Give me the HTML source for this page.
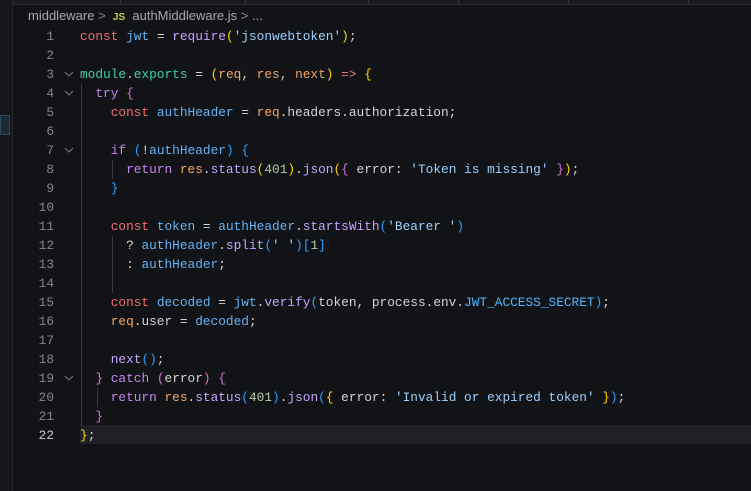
<!DOCTYPE html>
<html><head><meta charset="utf-8"><style>
html,body{margin:0;padding:0;width:751px;height:491px;overflow:hidden;background:#121316;}
body{position:relative;font-family:"Liberation Mono",monospace;}
.top{position:absolute;left:0;top:0;width:751px;height:4px;background:#1a1b1e;border-bottom:1px solid #2a2b2e;}
.sep{position:absolute;top:0;width:1px;height:4px;background:#333;}
.lb{position:absolute;left:0;top:0;width:12px;height:491px;background:#16171a;border-right:1px solid #26272a;}
.mark{position:absolute;left:0;top:115px;width:10px;height:20px;background:#1c2a33;border:1px solid #2c4a5a;box-sizing:border-box;}
.bc{position:absolute;left:28px;top:8px;font:13px "Liberation Sans",sans-serif;color:#a9a9a9;white-space:pre;}
.bc .js{color:#cbcb41;font-weight:bold;font-size:10px;}
.hl{position:absolute;left:80px;top:425px;width:671px;height:19px;background:#202124;}
.ln{position:absolute;left:20px;top:27px;width:34px;text-align:right;font-size:12.8px;line-height:19px;color:#858585;white-space:pre;}
.code{position:absolute;left:80px;top:27px;font-size:12.8px;line-height:19px;color:#d4d4d4;white-space:pre;}
.fold{position:absolute;left:64px;width:10px;height:6px;}
.guide{position:absolute;width:1px;background:#3a3b3e;}
.k{color:#f26d78}.c{color:#c586f0}.v{color:#64b4f6}.f{color:#c6a4ff}.o{color:#f2a765}.s{color:#9cd1ff}.n{color:#b5cea8}.t{color:#3fcfa8}.C{color:#4fb8ff}
.y{color:#ffd700}.p{color:#da70d6}.b{color:#2a9fff}
</style></head><body>
<div class="top"></div>
<div class="sep" style="left:12px"></div><div class="sep" style="left:120px"></div><div class="sep" style="left:245px"></div><div class="sep" style="left:368px"></div><div class="sep" style="left:458px"></div><div class="sep" style="left:568px"></div><div class="sep" style="left:688px"></div>
<div class="lb"></div><div class="mark"></div>
<div class="bc">middleware <span style="color:#888">&gt;</span>  <span class="js">JS</span>  authMiddleware.js <span style="color:#888">&gt;</span> ...</div>
<div class="hl"></div>
<div class="guide" style="left:81px;top:84px;height:342px"></div>
<div class="guide" style="left:112px;top:160px;height:19px"></div>
<div class="guide" style="left:112px;top:236px;height:57px"></div>
<div class="guide" style="left:97px;top:388px;height:19px"></div>
<svg class="fold" style="top:71px" viewBox="0 0 10 6"><path d="M1 1 L5 5 L9 1" fill="none" stroke="#7a7a7a" stroke-width="1"/></svg>
<svg class="fold" style="top:90px" viewBox="0 0 10 6"><path d="M1 1 L5 5 L9 1" fill="none" stroke="#7a7a7a" stroke-width="1"/></svg>
<svg class="fold" style="top:147px" viewBox="0 0 10 6"><path d="M1 1 L5 5 L9 1" fill="none" stroke="#7a7a7a" stroke-width="1"/></svg>
<svg class="fold" style="top:375px" viewBox="0 0 10 6"><path d="M1 1 L5 5 L9 1" fill="none" stroke="#7a7a7a" stroke-width="1"/></svg>
<div class="ln">1
2
3
4
5
6
7
8
9
10
11
12
13
14
15
16
17
18
19
20
21
<span style="color:#ccc">22</span></div>
<div class="code"><span class="k">const</span> <span class="v">jwt</span> = <span class="f">require</span><span class="y">(</span><span class="s">'jsonwebtoken'</span><span class="y">)</span>;

<span class="t">module</span>.<span class="t">exports</span> = <span class="y">(</span><span class="o">req</span>, <span class="o">res</span>, <span class="o">next</span><span class="y">)</span> <span class="k">=&gt;</span> <span class="y">{</span>
  <span class="c">try</span> <span class="p">{</span>
    <span class="k">const</span> <span class="v">authHeader</span> = <span class="o">req</span>.headers.authorization;

    <span class="c">if</span> <span class="b">(</span>!<span class="v">authHeader</span><span class="b">)</span> <span class="b">{</span>
      <span class="c">return</span> <span class="o">res</span>.<span class="f">status</span><span class="y">(</span><span class="n">401</span><span class="y">)</span>.<span class="f">json</span><span class="y">(</span><span class="p">{</span> error: <span class="s">'Token is missing'</span> <span class="p">}</span><span class="y">)</span>;
    <span class="b">}</span>

    <span class="k">const</span> <span class="v">token</span> = <span class="v">authHeader</span>.<span class="f">startsWith</span><span class="b">(</span><span class="s">'Bearer '</span><span class="b">)</span>
      ? <span class="v">authHeader</span>.<span class="f">split</span><span class="b">(</span><span class="s">' '</span><span class="b">)</span><span class="b">[</span><span class="n">1</span><span class="b">]</span>
      : <span class="v">authHeader</span>;

    <span class="k">const</span> <span class="v">decoded</span> = <span class="v">jwt</span>.<span class="f">verify</span><span class="b">(</span>token, process.env.<span class="C">JWT_ACCESS_SECRET</span><span class="b">)</span>;
    <span class="o">req</span>.user = <span class="v">decoded</span>;

    <span class="f">next</span><span class="b">()</span>;
  <span class="p">}</span> <span class="c">catch</span> <span class="p">(</span>error<span class="p">)</span> <span class="p">{</span>
    <span class="c">return</span> <span class="o">res</span>.<span class="f">status</span><span class="b">(</span><span class="n">401</span><span class="b">)</span>.<span class="f">json</span><span class="b">(</span><span class="y">{</span> error: <span class="s">'Invalid or expired token'</span> <span class="y">}</span><span class="b">)</span>;
  <span class="p">}</span>
<span class="y">}</span>;</div>
</body></html>
